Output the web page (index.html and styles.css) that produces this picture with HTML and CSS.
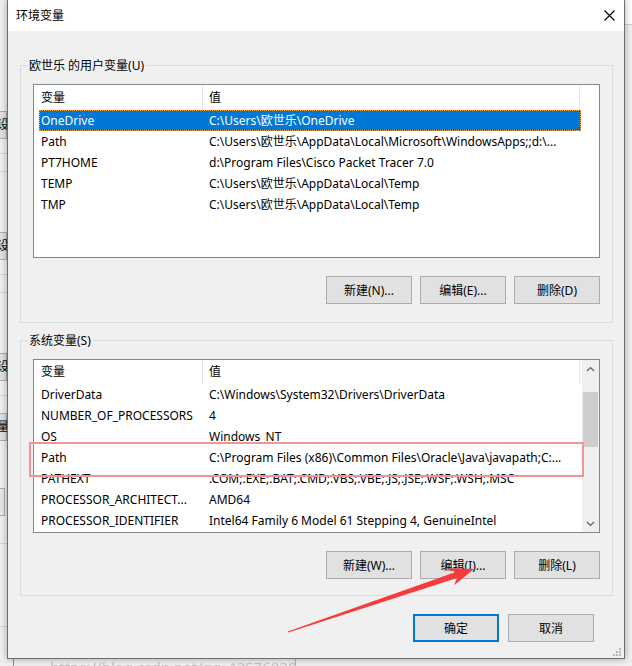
FILE: index.html
```html
<!DOCTYPE html>
<html lang="zh-CN">
<head>
  <meta charset="UTF-8">
  <meta name="viewport" content="width=device-width, initial-scale=1.0">
  <title>环境变量</title>
  <link rel="stylesheet" href="styles.css">
</head>
<body>
<div class="desk">

  <!-- windows behind the dialog -->
  <div class="backwin">
    <div class="bk-btn bk-first">设置</div>
    <div class="bk-line bk-l1"></div>
    <div class="bk-line bk-l2"></div>
    <div class="bk-btn bk-gap">设置</div>
    <div class="bk-line bk-l1"></div>
    <div class="bk-line bk-l2"></div>
    <div class="bk-btn bk-gap">设置</div>
    <div class="bk-line bk-l1"></div>
    <div class="bk-btn bk-plain">量值</div>
    <div class="bk-box"></div>
    <div class="bk-line bk-l3"></div>
    <div class="bk-line bk-l4"></div>
  </div>
  <div class="backright"></div>
  <div class="backbottom">https://blog.csdn.net/qq_43576028</div>

  <div class="dialog">
    <div class="titlebar">
      <span>环境变量</span>
      <svg class="close" width="11" height="11" viewBox="0 0 11 11">
        <path d="M0.5 0.5 L10.5 10.5 M10.5 0.5 L0.5 10.5" stroke="#000" stroke-width="1.1" fill="none"/>
      </svg>
    </div>

    <div class="dlg-body">
      <div class="group">
        <span class="group-title">欧世乐 的用户变量(U)</span>
        <div class="list">
          <div class="list-main">
            <div class="list-head"><div class="hcell">变量</div><div class="hcell">值</div></div>
            <div class="row selected"><div class="cell">OneDrive</div><div class="cell">C:\Users\欧世乐\OneDrive</div></div>
            <div class="row"><div class="cell">Path</div><div class="cell">C:\Users\欧世乐\AppData\Local\Microsoft\WindowsApps;;d:\...</div></div>
            <div class="row"><div class="cell">PT7HOME</div><div class="cell">d:\Program Files\Cisco Packet Tracer 7.0</div></div>
            <div class="row"><div class="cell">TEMP</div><div class="cell">C:\Users\欧世乐\AppData\Local\Temp</div></div>
            <div class="row"><div class="cell">TMP</div><div class="cell">C:\Users\欧世乐\AppData\Local\Temp</div></div>
          </div>
        </div>
        <div class="btn-row">
          <button class="btn">新建(N)...</button>
          <button class="btn">编辑(E)...</button>
          <button class="btn">删除(D)</button>
        </div>
      </div>

      <div class="group group-sys">
        <span class="group-title">系统变量(S)</span>
        <div class="list">
          <div class="list-main">
            <div class="list-head"><div class="hcell">变量</div><div class="hcell">值</div></div>
            <div class="row"><div class="cell">DriverData</div><div class="cell">C:\Windows\System32\Drivers\DriverData</div></div>
            <div class="row"><div class="cell">NUMBER_OF_PROCESSORS</div><div class="cell">4</div></div>
            <div class="row"><div class="cell">OS</div><div class="cell">Windows_NT</div></div>
            <div class="row"><div class="cell">Path</div><div class="cell">C:\Program Files (x86)\Common Files\Oracle\Java\javapath;C:...</div></div>
            <div class="row"><div class="cell">PATHEXT</div><div class="cell">.COM;.EXE;.BAT;.CMD;.VBS;.VBE;.JS;.JSE;.WSF;.WSH;.MSC</div></div>
            <div class="row"><div class="cell">PROCESSOR_ARCHITECT...</div><div class="cell">AMD64</div></div>
            <div class="row"><div class="cell">PROCESSOR_IDENTIFIER</div><div class="cell">Intel64 Family 6 Model 61 Stepping 4, GenuineIntel</div></div>
          </div>
          <div class="scrollbar">
            <div class="sb-arrow">
              <svg width="9" height="6" viewBox="0 0 9 6"><polyline points="1,5 4.5,1.5 8,5" fill="none" stroke="#606060" stroke-width="1.2"/></svg>
            </div>
            <div class="sb-track"><div class="sb-thumb"></div></div>
            <div class="sb-arrow">
              <svg width="9" height="6" viewBox="0 0 9 6"><polyline points="1,1 4.5,4.5 8,1" fill="none" stroke="#606060" stroke-width="1.2"/></svg>
            </div>
          </div>
        </div>
        <div class="btn-row">
          <button class="btn">新建(W)...</button>
          <button class="btn">编辑(I)...</button>
          <button class="btn">删除(L)</button>
        </div>
      </div>

      <div class="footer">
        <button class="btn primary">确定</button>
        <button class="btn">取消</button>
      </div>
    </div>

    <!-- red box drawn over the Path row -->
    <div class="mark"></div>

    <svg class="grip" width="9" height="9" viewBox="0 0 9 9">
      <rect x="6" y="0" width="2" height="2"/>
      <rect x="3" y="3" width="2" height="2"/>
      <rect x="6" y="3" width="2" height="2"/>
      <rect x="0" y="6" width="2" height="2"/>
      <rect x="3" y="6" width="2" height="2"/>
      <rect x="6" y="6" width="2" height="2"/>
    </svg>
  </div>

  <svg class="arrow" width="632" height="666" viewBox="0 0 632 666">
    <polygon points="287.8,631.5 455.0,572.3 448.4,568.2 474,569 454.2,585.2 457.0,578.0 288.2,632.5" fill="#f53b3b"/>
  </svg>
</div>
</body>
</html>
```

FILE: styles.css
```css
* {
  box-sizing: border-box;
}
body {
  margin: 0;
  font-family: "Noto Sans", "Noto Sans CJK SC", sans-serif;
  font-size: 12px;
  color: #000;
}
.desk {
  position: relative;
  width: 632px;
  height: 666px;
  overflow: hidden;
  background: #f0f0f0;
}

/* background windows */
.backwin {
  position: absolute;
  left: -53px;
  top: 0;
  width: 60px;
  height: 666px;
  display: flex;
  flex-direction: column;
}
.bk-btn {
  height: 28px;
  line-height: 26px;
  padding-left: 49px;
  white-space: nowrap;
  background: #e1e1e1;
  border: 1px solid #adadad;
  flex: none;
}
.bk-first { margin-top: 111px; }
.bk-gap { margin-top: 60px; }
.bk-plain { margin-top: 17px; }
.bk-box {
  height: 28px;
  margin-top: 47px;
  margin-right: 2px;
  border: 1px solid #adadad;
  background: #e6e6e6;
  flex: none;
}
.bk-line {
  height: 1px;
  background: #d9d9d9;
  flex: none;
}
.bk-l1 { margin-top: 14px; }
.bk-l2 { margin-top: 17px; }
.bk-l3 { margin-top: 27px; }
.bk-l4 { margin-top: 82px; }
.backright {
  position: absolute;
  left: 625px;
  top: 0;
  width: 7px;
  height: 666px;
  background: linear-gradient(#fff 0 24px, #cfcfcf 24px 25px, #f0f0f0 25px);
}
.backbottom {
  position: absolute;
  left: 13px;
  top: 658px;
  width: 283px;
  height: 20px;
  padding-left: 36px;
  border-left: 1px solid #8c8c8c;
  border-right: 1px solid #b5b5b5;
  font-size: 15px;
  line-height: 18px;
  color: #c4c4c4;
  white-space: nowrap;
  overflow: hidden;
}

/* dialog */
.dialog {
  position: absolute;
  left: 7px;
  top: 0;
  width: 618px;
  height: 659px;
  background: #f0f0f0;
  border: 1px solid #6f6f6f;
  border-top: 0;
  box-shadow: 0 0 7px rgba(0, 0, 0, 0.35);
}
.titlebar {
  height: 31px;
  background: #fff;
  display: flex;
  align-items: center;
  justify-content: space-between;
  padding: 0 9px 0 8px;
  line-height: 16px;
}
.dlg-body {
  padding: 34px 11px 0 12px;
}
.group {
  position: relative;
  border: 1px solid #dcdcdc;
  padding: 18px 12px 18px 12px;
}
.group-sys {
  margin-top: 17px;
  padding-bottom: 16px;
}
.group-title {
  position: absolute;
  top: -8px;
  left: 7px;
  padding: 0 1px;
  line-height: 16px;
  background: #f0f0f0;
  white-space: nowrap;
}

/* list view */
.list {
  display: flex;
  height: 174px;
  border: 1px solid #828790;
  background: #fff;
}
.list-main {
  flex: 1;
  overflow: hidden;
}
.list-head {
  display: grid;
  grid-template-columns: 168px 378px;
  height: 25px;
}
.group-sys .list-head {
  height: 24px;
}
.hcell {
  line-height: 25px;
  padding-left: 7px;
  white-space: nowrap;
}
.group-sys .hcell {
  line-height: 24px;
}
.hcell + .hcell {
  padding-left: 6px;
  border-left: 1px solid #e5e5e5;
  border-right: 1px solid #e5e5e5;
}
.row {
  display: grid;
  grid-template-columns: 163px 379px;
  width: 542px;
  height: 21px;
  margin-left: 5px;
  line-height: 21px;
}
.cell {
  padding-left: 2px;
  white-space: nowrap;
  overflow: hidden;
}
.cell + .cell {
  padding-left: 7px;
}
.row.selected {
  background: #0078d7;
  color: #fff;
  outline: 1px dotted #f3a64a;
  outline-offset: -1px;
}
.scrollbar {
  width: 17px;
  display: flex;
  flex-direction: column;
  background: #f0f0f0;
}
.sb-arrow {
  height: 17px;
  display: flex;
  align-items: center;
  justify-content: center;
}
.sb-track {
  flex: 1;
  padding: 15px 1px 0;
}
.sb-thumb {
  height: 55px;
  background: #cdcdcd;
}

/* buttons */
.btn-row {
  display: flex;
  justify-content: flex-end;
  gap: 8px;
  margin-top: 18px;
}
.btn {
  width: 86px;
  height: 28px;
  padding: 0;
  font: inherit;
  color: #000;
  background: #e1e1e1;
  border: 1px solid #adadad;
}
.btn.primary {
  border: 2px solid #0078d7;
}
.footer {
  display: flex;
  justify-content: flex-end;
  gap: 9px;
  margin-top: 18px;
  padding-right: 19px;
}

/* overlays */
.mark {
  position: absolute;
  left: 21px;
  top: 442px;
  width: 555px;
  height: 35px;
  border: 2px solid #f29494;
}
.grip {
  position: absolute;
  right: 2px;
  bottom: 1px;
  fill: #b8b8b8;
}
.arrow {
  position: absolute;
  left: 0;
  top: 0;
  pointer-events: none;
}
```
